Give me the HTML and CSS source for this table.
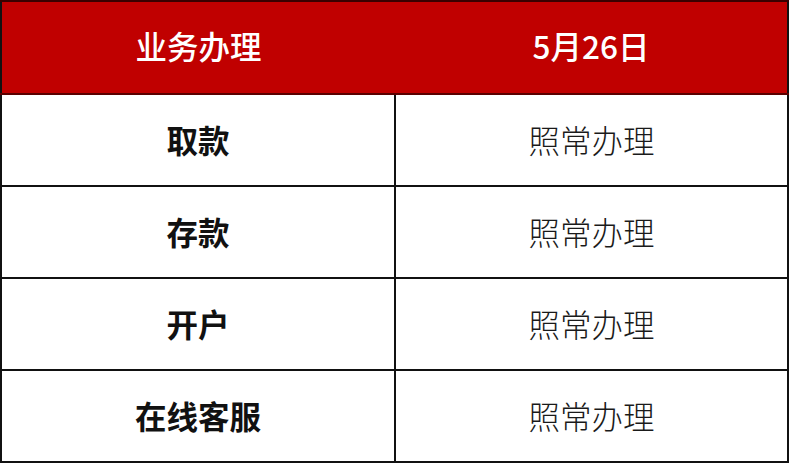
FILE: index.html
```html
<!DOCTYPE html>
<html lang="zh">
<head>
<meta charset="utf-8">
<link rel="stylesheet" href="styles.css">
</head>
<body>
<table class="schedule">
  <thead>
    <tr>
      <th class="col-a">业务办理</th>
      <th class="col-b">5月26日</th>
    </tr>
  </thead>
  <tbody>
    <tr><td class="name">取款</td><td class="status">照常办理</td></tr>
    <tr><td class="name">存款</td><td class="status">照常办理</td></tr>
    <tr><td class="name">开户</td><td class="status">照常办理</td></tr>
    <tr><td class="name">在线客服</td><td class="status">照常办理</td></tr>
  </tbody>
</table>
</body>
</html>
```
FILE: styles.css
```css
html, body {
  margin: 0;
  padding: 0;
  background: #ffffff;
}
body {
  font-family: "Noto Sans CJK SC", "Noto Sans", sans-serif;
}
.schedule {
  width: 789px;
  height: 463px;
  border-collapse: collapse;
  border: 2px solid #111;
  table-layout: fixed;
}
.schedule th {
  background: #c00000;
  color: #ffffff;
  font-size: 31.5px;
  font-weight: 500;
  height: 93px;
  padding: 0 0 5px 0;
  box-sizing: border-box;
  border-top: 2px solid #3a0000;
  border-bottom: 2px solid #5a0000;
}
.schedule .col-a { width: 394px; }
.schedule td {
  height: 92px;
  box-sizing: border-box;
  padding: 0 0 3px 0;
  text-align: center;
  font-size: 31.5px;
  color: #111;
  border: 2px solid #111;
}
.schedule td.name { font-weight: 700; }
.schedule td.status { font-weight: 300; color: #1a1a1a; }
```
